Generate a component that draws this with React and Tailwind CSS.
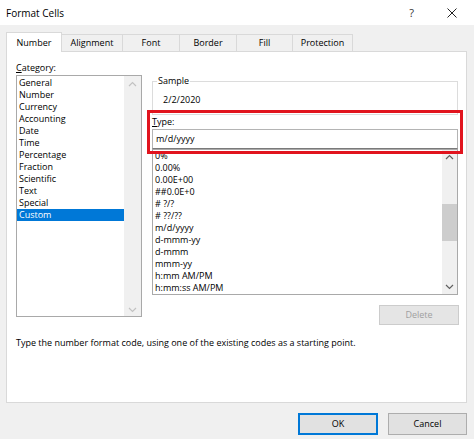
import React from "react";

const categories = [
  "General",
  "Number",
  "Currency",
  "Accounting",
  "Date",
  "Time",
  "Percentage",
  "Fraction",
  "Scientific",
  "Text",
  "Special",
  "Custom",
];

const formats = [
  "0%",
  "0.00%",
  "0.00E+00",
  "##0.0E+0",
  "# ?/?",
  "# ??/??",
  "m/d/yyyy",
  "d-mmm-yy",
  "d-mmm",
  "mmm-yy",
  "h:mm AM/PM",
  "h:mm:ss AM/PM",
];

const tabs = [
  { name: "Number", w: "w-[56px]" },
  { name: "Alignment", w: "w-[61px]" },
  { name: "Font", w: "w-[57px]" },
  { name: "Border", w: "w-[57px]" },
  { name: "Fill", w: "w-[56px]" },
  { name: "Protection", w: "w-[60px]" },
];

const Chevron = ({ up, color }) => (
  <svg width="9" height="6" viewBox="0 0 9 6" fill="none">
    <path
      d={up ? "M1 5 L4.5 1.5 L8 5" : "M1 1 L4.5 4.5 L8 1"}
      stroke={color}
      strokeWidth="1.2"
    />
  </svg>
);

const App = () => {
  return (
    <div className="relative w-[474px] h-[439px] overflow-hidden bg-[#f0f0f0] text-black font-['Open_Sans','Liberation_Sans',sans-serif] text-[9px] leading-[12px]">
      {/* title bar */}
      <div className="flex items-center h-[25px] bg-white pl-[6px] pr-[17px]">
        <span className="text-[10px] flex-1">Format Cells</span>
        <span className="text-[11px] mr-[33px] text-[#333]">?</span>
        <svg width="10" height="10" viewBox="0 0 10 10">
          <path d="M0.5 0.5 L9.5 9.5 M9.5 0.5 L0.5 9.5" stroke="#222" strokeWidth="1" />
        </svg>
      </div>

      {/* tabs */}
      <div className="flex items-end h-[26px] pl-[6px]">
        {tabs.map((t, i) =>
          i === 0 ? (
            <div
              key={t.name}
              className={`${t.w} h-[20px] -mb-px z-10 flex items-center justify-center bg-white border border-b-0 border-[#d9d9d9]`}
            >
              {t.name}
            </div>
          ) : (
            <div
              key={t.name}
              className={`${t.w} h-[17px] flex items-center justify-center border-t border-r border-[#d9d9d9]`}
            >
              {t.name}
            </div>
          )
        )}
      </div>

      {/* panel */}
      <div className="ml-[6px] w-[461px] h-[352px] bg-white border border-[#d9d9d9] pl-[9px] pt-[10px]">
        <div className="flex gap-[10px]">
          {/* category */}
          <div className="w-[126px] flex flex-col">
            <div className="h-[13px]">
              <span className="underline">C</span>ategory:
            </div>
            <div className="h-[242px] flex border border-[#a9a9a9]">
              <div className="flex-1 pt-[1px]">
                {categories.map((c) => (
                  <div
                    key={c}
                    className={`h-[12px] pl-[2px] ${
                      c === "Custom" ? "bg-[#0078d7] text-white" : ""
                    }`}
                  >
                    {c}
                  </div>
                ))}
              </div>
              <div className="w-[17px] bg-[#f0f0f0] flex flex-col items-center justify-between pt-[5px] pb-[3px]">
                <Chevron up color="#c2c2c2" />
                <Chevron color="#c2c2c2" />
              </div>
            </div>
          </div>

          {/* type */}
          <div className="w-[306px] flex flex-col">
            <div className="relative mt-[19px] h-[34px] border border-[#dcdcdc] pl-[10px] pt-[12px]">
              <span className="absolute -top-[7px] left-[4px] bg-white px-[1px]">
                Sample
              </span>
              2/2/2020
            </div>
            <div className="mt-[1px] h-[13px]">
              <span className="underline">T</span>ype:
            </div>
            <div className="h-[20px] border border-[#b4b4b4] border-b-[#7a7a7a] pl-[3px] flex items-center">
              m/d/yyyy
            </div>
            <div className="h-[146px] flex border border-[#a9a9a9] overflow-hidden">
              <div className="flex-1 pl-[2px]">
                {formats.map((f) => (
                  <div key={f} className="h-[12px] whitespace-pre">
                    {f}
                  </div>
                ))}
              </div>
              <div className="w-[15px] bg-[#f0f0f0] flex flex-col items-center pt-[4px] pb-[4px]">
                <Chevron up color="#606060" />
                <div className="mt-[44px] w-[15px] h-[37px] bg-[#cdcdcd]" />
                <div className="flex-1" />
                <Chevron color="#606060" />
              </div>
            </div>
            <div className="self-end mt-[10px] mr-[-1px] w-[80px] h-[20px] bg-[#e5e5e5] border border-[#cccccc] text-[#a0a0a0] flex items-center justify-center">
              Delete
            </div>
          </div>
        </div>
        <div className="mt-[12px]">
          Type the number format code, using one of the existing codes as a
          starting point.
        </div>
      </div>

      {/* buttons */}
      <div className="flex justify-end gap-[10px] mt-[10px] pr-[7px]">
        <div className="w-[80px] h-[22px] bg-[#e1e1e1] border-2 border-[#0078d7] flex items-center justify-center">
          OK
        </div>
        <div className="w-[79px] h-[22px] bg-[#e1e1e1] border border-[#adadad] flex items-center justify-center">
          Cancel
        </div>
      </div>

      {/* red highlight annotation */}
      <div className="absolute left-[147px] top-[110px] w-[316px] h-[44px] border-[3px] border-[#e1141e] pointer-events-none" />
    </div>
  );
};

export default App;
